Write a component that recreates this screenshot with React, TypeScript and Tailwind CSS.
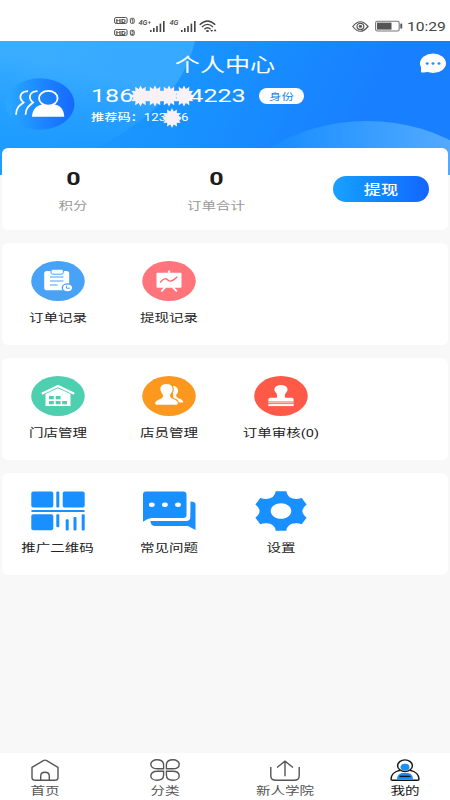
import type { ReactNode } from 'react';

const BLUE = '#1890ff';

function Wide({ children, className = '' }: { children: ReactNode; className?: string }) {
  return <span className={`inline-block whitespace-nowrap scale-x-[1.32] ${className}`}>{children}</span>;
}

function burst(cx: number, cy: number, r: number) {
  const pts: string[] = [];
  for (let i = 0; i < 24; i++) {
    const rad = i % 2 === 0 ? r : r * 0.68;
    const a = (i * Math.PI) / 12 - Math.PI / 2;
    pts.push(`${(cx + rad * Math.cos(a)).toFixed(2)},${(cy + rad * Math.sin(a)).toFixed(2)}`);
  }
  return pts.join(' ');
}

function Signal({ label, plus }: { label: string; plus?: boolean }) {
  return (
    <svg className="overflow-visible" width="28" height="14" viewBox="0 0 28 14" fill="#444">
      <text x="-0.5" y="6.4" fontSize="7" fontWeight="500" fontStyle="italic" fontFamily="Roboto" textLength="9" lengthAdjust="spacingAndGlyphs">{label}</text>
      {plus && <text x="9" y="4.5" fontSize="5" fontWeight="700" fontFamily="Roboto">+</text>}
      <rect x="11" y="11" width="1.6" height="2" />
      <rect x="14" y="9" width="1.6" height="4" />
      <rect x="17.2" y="7" width="1.6" height="6" />
      <rect x="20.6" y="4.6" width="1.6" height="8.4" />
      <rect x="24" y="2" width="1.6" height="11" />
    </svg>
  );
}

function StatusBar() {
  return (
    <div className="flex h-[41px] items-start bg-white pt-[16px] pl-[114px]">
      <svg width="23" height="22" viewBox="0 0 23 22" fill="none" stroke="#555" strokeWidth="1">
        {[1.5, 13.5].map((y, i) => (
          <g key={y}>
            <rect x="0.6" y={y} width="12.5" height="6" rx="1.5" />
            <text x="1.8" y={y + 5.3} fontSize="6.2" fontWeight="700" fontFamily="Roboto" fill="#444" stroke="none" textLength="10" lengthAdjust="spacingAndGlyphs">HD</text>
            <rect x="16.4" y={y + 0.8} width="3.8" height="5" rx="1" />
            <text x="17.1" y={y + 5.1} fontSize="4.8" fontWeight="700" fontFamily="Roboto" fill="#444" stroke="none">{i + 1}</text>
          </g>
        ))}
      </svg>
      <div className="mt-[3px] ml-[2px] flex gap-[3px]">
        <Signal label="4G" plus />
        <Signal label="4G" />
      </div>
      <svg className="mt-[4px] ml-px" width="19" height="13" viewBox="0 0 19 13" fill="none" stroke="#444" strokeWidth="1.3">
        <path d="M0.7 4.7Q8.5-2.8 16.3 4.7M3 7Q8.5 1.8 14 7M5.4 9.2Q8.5 6.3 11.6 9.2" />
        <ellipse cx="8.5" cy="11" rx="1.5" ry="1" fill="#444" stroke="none" />
        <path d="M11.3 10h2.8l-1.4 2zM14.7 11.3h2.8L16.1 9z" fill="#444" stroke="none" />
      </svg>
      <svg className="mt-[5px] ml-[134px]" width="17" height="11" viewBox="0 0 17 11" fill="none" stroke="#555">
        <path d="M0.8 5.5Q8.3-4 16 5.5Q8.3 15 0.8 5.5Z" strokeWidth="1.2" />
        <ellipse cx="8.4" cy="5.4" rx="3.4" ry="3" strokeWidth="1.2" />
        <ellipse cx="8.4" cy="5.4" rx="1.7" ry="1.4" fill="#555" stroke="none" />
      </svg>
      <svg className="mt-[4px] ml-[6px]" width="28" height="13" viewBox="0 0 28 13">
        <rect x="0.6" y="1.2" width="23.6" height="9.8" rx="1.8" fill="#fff" stroke="#777" strokeWidth="1.1" />
        <rect x="2" y="2.6" width="14.5" height="7" fill="#555" />
        <rect x="25.3" y="3.5" width="1.9" height="5" rx="0.6" fill="#555" />
      </svg>
      <span className="mt-[3px] ml-[4px] inline-block origin-left scale-x-[1.2] font-[Roboto] text-[13px] leading-[16px] text-[#444]">10:29</span>
    </div>
  );
}

function HeaderBackdrop() {
  return (
    <svg className="absolute inset-0 h-full w-full" viewBox="0 0 450 134" preserveAspectRatio="none">
      <defs>
        <linearGradient id="base" gradientUnits="userSpaceOnUse" x1="50" y1="0" x2="340" y2="134">
          <stop offset="0" stopColor="#1e9dff" />
          <stop offset="0.5" stopColor="#1892ff" />
          <stop offset="1" stopColor="#187fff" />
        </linearGradient>
        <linearGradient id="glow" x1="0.75" y1="0" x2="0.45" y2="1">
          <stop offset="0.3" stopColor="#54bcff" stopOpacity="0.5" />
          <stop offset="1" stopColor="#1e9dff" stopOpacity="0" />
        </linearGradient>
        <linearGradient id="wave" gradientUnits="userSpaceOnUse" x1="280" y1="0" x2="450" y2="0">
          <stop offset="0" stopColor="#1a8fff" />
          <stop offset="1" stopColor="#52aaff" />
        </linearGradient>
      </defs>
      <rect width="450" height="134" fill="url(#base)" />
      <path d="M0 0H195Q185 42 150 72Q105 110 30 134H0Z" fill="url(#glow)" />
      <ellipse cx="367" cy="182" rx="142" ry="102" fill="url(#wave)" />
    </svg>
  );
}

function Header() {
  return (
    <header className="relative h-[134px] overflow-hidden text-white">
      <HeaderBackdrop />
      <div className="relative grid h-[46px] grid-cols-[1fr_auto_1fr] items-center">
        <span />
        <h1 className="pt-[3px] text-[19px] leading-[28px]"><Wide>个人中心</Wide></h1>
        <svg className="mr-[3px] justify-self-end" width="28" height="22" viewBox="0 0 28 22">
          <ellipse cx="14" cy="10.3" rx="13" ry="9.7" fill="#fff" />
          <path d="M2 11V19.3Q6 20 9.5 18.4Z" fill="#fff" />
          <g fill={BLUE}>
            <ellipse cx="8.2" cy="10.5" rx="1.5" ry="1.3" />
            <ellipse cx="14" cy="10.5" rx="1.5" ry="1.3" />
            <ellipse cx="20" cy="10.5" rx="1.5" ry="1.3" />
          </g>
        </svg>
      </div>
      <div className="relative -mt-[9px] flex pl-[5px]">
        <svg width="70" height="52" viewBox="0 0 70 52">
          <defs>
            <linearGradient id="avatar" x1="0" x2="1">
              <stop offset="0" stopColor="#2ba8ff" />
              <stop offset="0.35" stopColor="#1f93ff" />
              <stop offset="1" stopColor="#1767ff" />
            </linearGradient>
          </defs>
          <ellipse cx="35" cy="26" rx="34.5" ry="25.7" fill="url(#avatar)" />
          <g fill="none" stroke="#fff" strokeWidth="1.8">
            <ellipse cx="43.3" cy="20.3" rx="9.3" ry="7.4" />
            <path d="M23 13.2C15 13.5 13 20 18.5 24.5C13.5 28 11.2 30.5 11 36.8" />
            <path d="M32.5 13.2C24.5 13.5 22.5 20 28 24.5C23.5 28 20.8 30.5 20.5 36.8" />
          </g>
          <path d="M27 38.8C27.3 31.3 32 26.3 39 26.5Q43.5 29.3 48 26.5C55 26.3 59 31.3 59.3 38.8Z" fill="#fff" />
        </svg>
        <div className="flex flex-col pl-[16px]">
          <div className="mt-px flex h-[34px] items-center">
            <div className="flex h-[24px] w-[155px] items-center font-[Roboto] text-[19px] leading-[24px]">
              <Wide className="origin-left">186</Wide>
              <svg className="ml-[10px] shrink-0 overflow-visible" width="58" height="22" viewBox="0 0 58 22" fill="#f8f1f6">
                {[7.5, 22, 36, 51].map((x) => <polygon key={x} points={burst(x, 11, 10.6)} />)}
              </svg>
              <Wide className="ml-auto origin-right">4223</Wide>
            </div>
            <span className="ml-[13px] flex h-[16px] w-[45px] items-center justify-center rounded-full bg-white pt-px text-[9.5px] leading-[14px] text-[#1684e8]">
              <Wide>身份</Wide>
            </span>
          </div>
          <div className="relative -mt-[2px] h-[14px] text-[10px] leading-[14px]">
            <Wide className="origin-left font-medium">推荐码：<span className="font-[Roboto] font-normal">123456</span></Wide>
            <svg className="absolute top-[-3px] left-[71px]" width="20" height="20" viewBox="0 0 20 20">
              <polygon points={burst(10, 10, 9.9)} fill="#f8f1f6" />
            </svg>
          </div>
        </div>
      </div>
    </header>
  );
}

function Stat({ value, label }: { value: string; label: string }) {
  return (
    <div className="flex w-[143px] flex-col items-center">
      <span className="mt-[19px] font-[Roboto] text-[19px] leading-[24px] font-bold text-[#1c1c1c]"><Wide>{value}</Wide></span>
      <span className="mt-[8px] mr-px text-[11px] leading-[16px] text-[#999]"><Wide>{label}</Wide></span>
    </div>
  );
}

function Disc({ color, children }: { color: string; children: ReactNode }) {
  return (
    <svg width="54" height="40" viewBox="0 0 54 40">
      <ellipse cx="27" cy="20" rx="26.8" ry="19.9" fill={color} />
      {children}
    </svg>
  );
}

const orderIcon = (
  <Disc color="#48a2f7">
    <rect x="13.2" y="10" width="25" height="19.3" rx="2.6" fill="#fff" />
    <rect x="20" y="8.2" width="12.4" height="5" rx="1.8" fill="#fff" stroke="#48a2f7" strokeWidth="1" />
    <path d="M19 16H32.5M19 20H32.5M19 24H26.5" stroke="#48a2f7" strokeWidth="1.2" />
    <ellipse cx="36.5" cy="26.8" rx="5.2" ry="4" fill="#fff" stroke="#48a2f7" strokeWidth="1.3" />
    <path d="M35.5 24.7V27.2H38.8" fill="none" stroke="#48a2f7" strokeWidth="1" />
  </Disc>
);

const withdrawIcon = (
  <Disc color="#ff757b">
    <rect x="14.5" y="11.7" width="25" height="15" rx="1" fill="#fff" />
    <rect x="26" y="9.5" width="2.2" height="3" fill="#fff" />
    <path d="M23 26.5L19.8 29.8M31 26.5L34.3 29.8" stroke="#fff" strokeWidth="1.8" strokeLinecap="round" />
    <path d="M18.2 21.5Q23 15.3 26.2 19.3Q29 22 35.3 15.8" fill="none" stroke="#ff6970" strokeWidth="1.4" />
  </Disc>
);

const shopIcon = (
  <Disc color="#4dcfb0">
    <path d="M10.8 17.8L27 10L43.2 17.8" fill="none" stroke="#fff" strokeWidth="2.2" />
    <path d="M14.5 18L27 12.3L39.5 18V30H14.5Z" fill="#fff" />
    <g fill="#4dcfb0">
      <rect x="18" y="20" width="4.8" height="3.3" />
      <rect x="24.7" y="20" width="4.8" height="3.3" />
      <rect x="18" y="25" width="4.8" height="3.3" />
      <rect x="24.7" y="25" width="4.8" height="3.3" />
      <rect x="31.2" y="25" width="4.8" height="3.3" />
    </g>
  </Disc>
);

const staffIcon = (
  <Disc color="#fb981d">
    <g fill="#fff" stroke="#fb981d" strokeWidth="1.2">
      <path d="M30 9.2C36 9 38.8 15 34.8 19C34.3 21 36 21.6 38 22.3C41.8 23.6 42.5 26.2 41.5 27L31 27Z" />
      <path d="M24.3 7.5C31.8 7.5 33 14 28.8 18.6C28 21 29.5 21.8 32 22.7C36.5 24.2 36.8 26 36.2 28.2Q35.8 29.4 34 29.4H14.8Q12.8 29.4 12.6 27.5C12.5 24.5 14.8 23.5 18 22.4C20.5 21.6 21 20 19.8 18.2C16 13 17.5 7.5 24.3 7.5Z" />
    </g>
  </Disc>
);

const auditIcon = (
  <Disc color="#ff5947">
    <path d="M27 9C33 9 34.8 13 32.8 15.8C30.5 18.5 30.5 19.5 31.3 21.7H37.5Q39.7 21.7 39.7 23.5V25.4H14.3V23.5Q14.3 21.7 16.5 21.7H22.7C23.5 19.5 23.5 18.5 21.2 15.8C19.2 13 21 9 27 9Z" fill="#fff" />
    <path d="M14.3 26.8H39.7" stroke="#fff" strokeWidth="0.8" />
    <path d="M14.3 29.1H39.7" stroke="#fff" strokeWidth="2" />
  </Disc>
);

const qrIcon = (
  <svg width="54" height="40" viewBox="0 0 54 40" fill={BLUE}>
    <rect x="0.3" y="0.5" width="22" height="16" rx="2" />
    <rect x="25.3" y="0.5" width="3" height="16" rx="1" />
    <rect x="31.7" y="0.5" width="22" height="16" rx="2" />
    <rect x="0.3" y="19" width="53.4" height="2" rx="0.8" />
    <rect x="0.3" y="23.3" width="22" height="16" rx="2" />
    <rect x="25.3" y="23.3" width="3" height="13" rx="1" />
    <rect x="34.7" y="28.3" width="3" height="11.2" rx="1" />
    <rect x="42.5" y="26" width="3" height="13.5" rx="1" />
    <rect x="50.7" y="23.3" width="3" height="16.2" rx="1" />
  </svg>
);

const faqIcon = (
  <svg width="54" height="40" viewBox="0 0 54 40" fill={BLUE}>
    <path d="M4 0.5H41Q44.5 0.5 44.5 3.5V24.3Q44.5 27 41 27H9.5Q5 27.5 1 30.7V3.5Q1 0.5 4 0.5Z" />
    <path d="M48.5 10.5Q53.5 10.5 53.5 13.5V39L46 35H13Q8.8 35 8.3 30H44Q48.3 30 48.3 26Z" />
    <g fill="#fff">
      <ellipse cx="9.8" cy="13.7" rx="2.9" ry="2.2" />
      <ellipse cx="22.9" cy="13.7" rx="2.9" ry="2.2" />
      <ellipse cx="36" cy="13.7" rx="2.9" ry="2.2" />
    </g>
  </svg>
);

const settingsIcon = (
  <svg width="54" height="40" viewBox="0 0 54 40">
    <path fillRule="evenodd" fill={BLUE} d="M21.7 0.3H32.3Q33.3 7.6 41.5 7.9Q44.5 8 47.7 7L52.6 13.5Q44.2 20 52.6 26.7L47.7 33.2Q44.5 31.9 41.5 32.2Q33.3 32.5 32.3 39.7H21.7Q20.7 32.5 12.5 32.2Q9.5 31.9 6.3 33.2L1.4 26.7Q9.8 20 1.4 13.5L6.3 7Q9.5 8 12.5 7.9Q20.7 7.6 21.7 0.3ZM27 12.2C21.2 12.2 16.7 15.7 16.7 20C16.7 24.3 21.2 27.8 27 27.8C32.8 27.8 37.3 24.3 37.3 20C37.3 15.7 32.8 12.2 27 12.2Z" />
  </svg>
);

type Entry = { label: string; icon: ReactNode };

const groups: Entry[][] = [
  [
    { label: '订单记录', icon: orderIcon },
    { label: '提现记录', icon: withdrawIcon },
  ],
  [
    { label: '门店管理', icon: shopIcon },
    { label: '店员管理', icon: staffIcon },
    { label: '订单审核(0)', icon: auditIcon },
  ],
  [
    { label: '推广二维码', icon: qrIcon },
    { label: '常见问题', icon: faqIcon },
    { label: '设置', icon: settingsIcon },
  ],
];

const tabs: Entry[] = [
  {
    label: '首页',
    icon: (
      <svg className="shrink-0" width="30" height="24" viewBox="0 0 30 24" fill="none" stroke="#555" strokeWidth="1.4">
        <path d="M2 8.4L13.3 1.6Q15 0.7 16.7 1.6L28 8.4V18.5Q28 21.3 24.5 21.3H5.5Q2 21.3 2 18.5Z" />
        <path d="M10.7 21V17Q10.7 13.3 15 13.3Q19.3 13.3 19.3 17V21" />
      </svg>
    ),
  },
  {
    label: '分类',
    icon: (
      <svg className="shrink-0" width="30" height="24" viewBox="0 0 30 24" fill="none" stroke="#555" strokeWidth="1.4">
        <path d="M13.6 9.8H7.5C2.8 9.8 0.8 7.8 0.8 5.2C0.8 2.7 3.5 0.8 7 0.8C11 0.8 13.6 2.8 13.6 6ZM16.4 9.8H22.5C27.2 9.8 29.2 7.8 29.2 5.2C29.2 2.7 26.5 0.8 23 0.8C19 0.8 16.4 2.8 16.4 6ZM13.6 12.3H7.5C2.8 12.3 0.8 14.3 0.8 16.9C0.8 19.4 3.5 21.3 7 21.3C11 21.3 13.6 19.3 13.6 16.1ZM16.4 12.3H22.5C27.2 12.3 29.2 14.3 29.2 16.9C29.2 19.4 26.5 21.3 23 21.3C19 21.3 16.4 19.3 16.4 16.1Z" />
      </svg>
    ),
  },
  {
    label: '新人学院',
    icon: (
      <svg className="shrink-0" width="30" height="24" viewBox="0 0 30 24" fill="none" stroke="#555" strokeWidth="1.4">
        <path d="M0.8 8V17Q0.8 21.3 6 21.3H24Q29.2 21.3 29.2 17V8" />
        <path d="M15 17.2V2M7 8.5L15 2.2L23 8.5" />
      </svg>
    ),
  },
  {
    label: '我的',
    icon: (
      <svg className="shrink-0" width="30" height="24" viewBox="0 0 30 24" fill="none" stroke="#151515" strokeWidth="1.4">
        <path d="M10.3 11.3C3.8 12.5 1 16.5 1 20.2Q1 21.3 2.3 21.3H27.7Q29 21.3 29 20.2C29 16.5 26.2 12.5 19.7 11.3" />
        <ellipse cx="15" cy="6.7" rx="7.4" ry="5.8" />
        <ellipse cx="15" cy="8.2" rx="4.4" ry="3.4" fill={BLUE} stroke="none" />
        <path d="M7 20.6C7 16.5 9.5 14 13 14H17C20.5 14 23 16.5 23 20.6Z" fill={BLUE} stroke="none" />
        <path d="M9.5 17.4H20.5" />
      </svg>
    ),
  },
];

export default function App() {
  return (
    <div className="flex h-[800px] w-[450px] flex-col overflow-hidden bg-[#f8f8f8] font-['Roboto','Noto_Sans_CJK_SC',sans-serif]">
      <StatusBar />
      <Header />
      <main className="relative -mt-[27px] flex flex-1 flex-col px-[2px]">
        <section className="flex h-[82px] rounded-[6px] bg-white">
          <Stat value="0" label="积分" />
          <Stat value="0" label="订单合计" />
          <button className="mt-[28px] ml-[45px] flex h-[26px] w-[96px] items-center justify-center rounded-full bg-linear-to-r from-[#1aa1ff] to-[#1665ff] pt-[2px] text-[13px] leading-[18px] font-medium text-white">
            <Wide>提现</Wide>
          </button>
        </section>
        {groups.map((group) => (
          <section key={group[0].label} className="mt-[12.8px] grid h-[102.2px] grid-cols-4 rounded-[6px] bg-white">
            {group.map((entry) => (
              <div key={entry.label} className="flex flex-col items-center pt-[18px]">
                {entry.icon}
                <span className="mt-[10px] text-[11px] leading-[16px] text-[#222]"><Wide>{entry.label}</Wide></span>
              </div>
            ))}
          </section>
        ))}
      </main>
      <nav className="flex h-[47px] justify-between bg-white">
        {tabs.map((tab, i) => (
          <div key={tab.label} className="flex w-[90px] flex-col items-center pt-[6px]">
            {tab.icon}
            <span className={i === 3 ? 'text-[11px] leading-[18px] text-[#151515]' : 'text-[11px] leading-[18px] text-[#555]'}>
              <Wide>{tab.label}</Wide>
            </span>
          </div>
        ))}
      </nav>
    </div>
  );
}
